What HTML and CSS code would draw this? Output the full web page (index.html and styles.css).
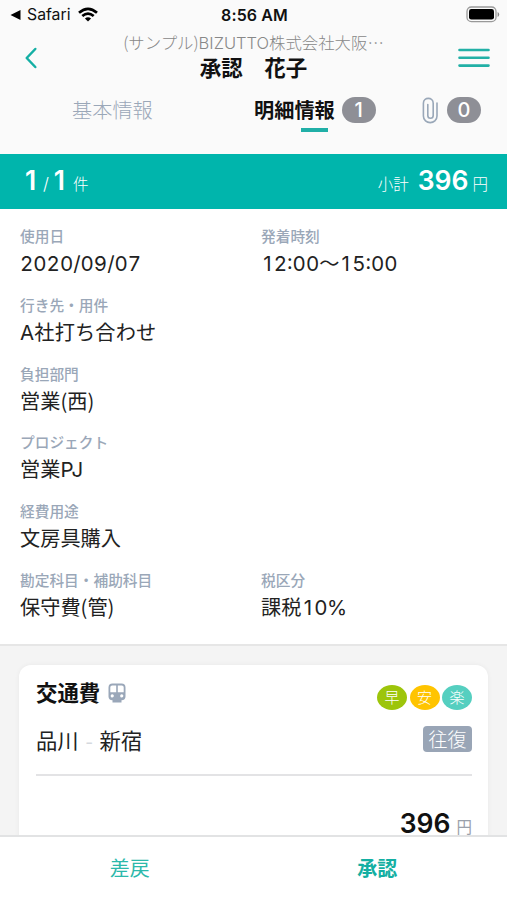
FILE: index.html
```html
<!DOCTYPE html>
<html lang="ja">
<head>
<meta charset="utf-8">
<title>明細情報</title>
<link rel="stylesheet" href="styles.css">
</head>
<body>
<div class="app">
  <div class="status">
    <div class="status-left">
      <svg width="12" height="12" viewBox="0 0 12 12"><path d="M0.5 6 10.5 1v10z" fill="#000"/></svg>
      <span class="status-app">Safari</span>
      <svg width="20" height="16" viewBox="0 0 20 16" fill="none" stroke="#000" stroke-width="2.7"><path d="M1 5.8Q10-2.2 19 5.8"/><path d="M4.3 9.1Q10 4.2 15.7 9.1"/><path d="M10 14.6 6.9 11.6Q10 9 13.1 11.6z" fill="#000" stroke="none"/></svg>
    </div>
    <div class="status-time">8:56 AM</div>
    <svg class="battery" width="34" height="17" viewBox="0 0 34 17"><rect x="1" y="1" width="29" height="14.6" rx="4.4" fill="none" stroke="#999" stroke-width="1.3"/><rect x="3" y="3" width="25" height="10.6" rx="2.4"/><path d="M31.6 6v5q1.6-.7 1.6-2.5T31.6 6" fill="#888"/></svg>
  </div>
  <header class="header">
    <svg class="back" width="14" height="22" viewBox="0 0 14 22"><path d="M11.3 2 2.7 11l8.6 9" fill="none" stroke="#14afa4" stroke-width="2.5" stroke-linecap="round" stroke-linejoin="round"/></svg>
    <div class="titles">
      <div class="company">(サンプル)<span class="latin">BIZUTTO</span>株式会社大阪<span class="dots">…</span></div>
      <h1 class="title">承認　花子</h1>
    </div>
    <svg class="menu" width="32" height="20" viewBox="0 0 32 20" stroke="#22b0a6" stroke-width="2.6" stroke-linecap="round"><path d="M1.5 2h29M1.5 9.8h29M1.5 17.6h29"/></svg>
  </header>
  <nav class="tabs">
    <div class="tab tab-basic">基本情報</div>
    <div class="tab tab-detail"><span class="tab-active">明細情報</span><span class="count">1</span></div>
    <div class="tab tab-files">
      <svg width="17" height="27" viewBox="0 0 17 27" fill="none" stroke="#99a7b8" stroke-width="1.6" stroke-linecap="round"><path d="M15 6v13c0 8.800-13.600 8.800-13.600 0V6.200c0-6.400 9.800-6.400 9.800 0v12.300a2.700 2.700 0 0 1-5.400 0V7.500"/></svg>
      <span class="count">0</span>
    </div>
  </nav>
  <div class="summary">
    <div class="summary-count"><b>1</b><i>/</i><b>1</b><small>件</small></div>
    <div class="summary-total"><small>小計</small><b>396</b><small>円</small></div>
  </div>
  <main class="scroll">
    <dl class="details">
      <div class="field"><dt>使用日</dt><dd><span class="num">2020/09/07</span></dd></div>
      <div class="field"><dt>発着時刻</dt><dd><span class="num"><span class="one">1</span>2:00</span>～<span class="num"><span class="one">1</span>5:00</span></dd></div>
      <div class="field wide"><dt>行き先・用件</dt><dd class="loose"><span class="alpha">A</span>社打ち合わせ</dd></div>
      <div class="field wide"><dt>負担部門</dt><dd>営業(西)</dd></div>
      <div class="field wide"><dt>プロジェクト</dt><dd>営業<span class="alpha">PJ</span></dd></div>
      <div class="field wide"><dt>経費用途</dt><dd>文房具購入</dd></div>
      <div class="field"><dt>勘定科目・補助科目</dt><dd>保守費(管)</dd></div>
      <div class="field"><dt>税区分</dt><dd>課税<span class="num rate"><span class="one">1</span>0%</span></dd></div>
    </dl>
    <section class="cards">
      <article class="card">
        <div class="card-head">
          <h2>交通費</h2>
          <svg class="train" width="18" height="20" viewBox="0 0 18 20"><path fill="#9aa7b9" fill-rule="evenodd" d="M4.500.5h9q4 0 4 4v9q0 3.500-4 3.700V19.500h-9v-2.300Q.5 17 .5 13.500v-9q0-4 4-4M4.200 2.500Q2.300 2.500 2.300 4.200v5h5.900V2.500zm5.600 0v6.700h5.900V4.200q0-1.700-1.900-1.700zM4.200 11.300a1.600 1.600 0 1 0 .1 3.200 1.600 1.600 0 0 0-.1-3.200m9.500 0a1.600 1.600 0 1 0 .1 3.200 1.600 1.600 0 0 0-.1-3.200"/></svg>
          <div class="marks"><span class="mark fast">早</span><span class="mark cheap">安</span><span class="mark easy">楽</span></div>
        </div>
        <div class="route"><span>品川</span><span class="dash">-</span><span>新宿</span><span class="trip">往復</span></div>
        <div class="fare"><b>396</b><small>円</small></div>
      </article>
    </section>
  </main>
  <footer class="actions">
    <div class="action">差戻</div>
    <div class="action primary">承認</div>
  </footer>
</div>
</body>
</html>
```
FILE: styles.css
```css
* { box-sizing: border-box; }
body, h1, h2, dl, dt, dd { margin: 0; }
body { background: #fafafa; color: #222; font-family: "Noto Sans CJK JP", sans-serif; }
svg { display: block; flex: none; }
.app { width: 507px; height: 900px; display: flex; flex-direction: column; overflow: hidden; }

.status { height: 30px; flex: none; display: grid; grid-template-columns: 1fr auto 1fr; align-items: center; padding: 0 8px 0 10px; font: 600 16px/30px Inter, sans-serif; color: #111; }
.status-left { display: flex; align-items: center; }
.status-app { margin: 0 7px 0 5px; font-weight: 400; font-size: 15.8px; }
.status-time { letter-spacing: .1px; }
.battery { justify-self: end; margin: -1px -1px 0 0; }

.header { height: 55px; flex: none; display: flex; align-items: flex-start; padding: 0 17px 0 24px; }
.back { margin-top: 17px; }
.titles { flex: 1; text-align: center; }
.company { height: 25px; font-size: 16.4px; line-height: 25px; color: #888; font-weight: 300; white-space: nowrap; padding-left: 11px; }
.latin { font-family: Inter, sans-serif; font-size: 16.5px; }
.title { font-size: 21.5px; line-height: 23px; font-weight: 700; color: #111; padding-left: 11px; }
.menu { margin-top: 18px; }

.tabs { height: 69px; flex: none; display: flex; padding-left: 72px; font-size: 20.2px; line-height: 50px; }
.tab { display: flex; align-items: center; height: 50px; }
.tab-basic { color: #9aa7b8; font-weight: 300; width: 182px; }
.tab-detail { color: #111; font-weight: 700; width: 168px; }
.tab-active { height: 50px; position: relative; }
.tab-active::after { content: ""; position: absolute; left: 47px; top: 43px; width: 27px; height: 4px; background: #20afa7; }
.count { height: 26px; width: 34px; margin-left: 7px; border-radius: 13px; background: #8e8f96; color: #fff; text-align: center; font: 500 20px/26px Inter, sans-serif; }
.tab-files .count { margin-left: 8px; }

.summary { height: 55px; flex: none; display: flex; justify-content: space-between; padding: 0 19px 0 22px; background: #00b5ac; color: #fff; line-height: 53px; }
.summary-count, .summary-total { display: flex; align-items: baseline; }
.summary b, .fare b { font-family: Inter, sans-serif; font-size: 26.5px; font-weight: 600; }
.summary-count b { width: 17px; text-align: center; }
.summary i { font: 300 17px Inter, sans-serif; margin: 0 2px 0 4px; }
.summary small { font-size: 15.5px; font-weight: 300; }
.summary-count small { margin-left: 5px; }
.summary-total b { margin: 0 4px 0 9px; }

.scroll { flex: 1; min-height: 0; overflow: hidden; background: #f4f4f4; }
.details { height: 437px; padding: 16px 20px 0; display: grid; grid-template-columns: 241px 1fr; grid-auto-rows: 68.75px; align-content: start; background: #fff; border-bottom: 2px solid #e6e6e6; }
.wide { grid-column: 1 / -1; }
dt { font-size: 14.7px; line-height: 22px; font-weight: 500; color: #9aa7b8; }
dd { font-size: 20.2px; line-height: 31px; color: #222; white-space: nowrap; }
.loose { letter-spacing: .15px; }
.num, .alpha { font-family: Inter, sans-serif; font-size: 20.5px; }
.num { font-feature-settings: "tnum"; }
.one { display: inline-block; width: 12.8px; text-align: center; font-feature-settings: normal; }
.rate { letter-spacing: -.4px; }

.cards { padding: 19px 19px 0; }
.card { height: 200px; padding: 0 16px 0 17px; border-radius: 12px; background: #fff; box-shadow: 0 0 5px rgba(0, 0, 0, .05); }
.card-head { height: 54px; display: flex; align-items: center; }
h2 { font-size: 21.4px; line-height: 54px; color: #111; }
.train { margin: 2px 0 0 8px; }
.marks { margin: 11px 0 0 auto; display: flex; gap: 2.5px; }
.mark { width: 30px; height: 25px; border-radius: 50%; color: #fff; font-size: 15px; line-height: 23px; font-weight: 300; text-align: center; }
.fast { background: #9dc50b; }
.cheap { background: #ffc400; }
.easy { background: #55cfc0; }
.route { height: 57px; display: flex; align-items: flex-start; border-bottom: 2px solid #e3e3e5; font-size: 21.3px; line-height: 41px; color: #222; }
.dash { width: 21px; text-align: center; color: #d5d9de; }
.trip { margin: 7px 0 0 auto; width: 49px; height: 26px; border-radius: 4px; background: #99a5b6; color: #fff; font-size: 19px; line-height: 25px; font-weight: 300; text-align: center; }
.fare { display: flex; justify-content: flex-end; align-items: baseline; padding-top: 34px; line-height: 26px; color: #111; }
.fare small { margin-left: 6px; font-size: 15.5px; line-height: 16px; color: #9aa0aa; }

.actions { height: 65px; flex: none; display: flex; background: #fff; border-top: 2px solid #e2e3e4; padding: 0 6px; }
.action { flex: 1; text-align: center; font-size: 20px; line-height: 61px; color: #2cb9ab; }
.primary { font-weight: 700; color: #14afa2; }
```
